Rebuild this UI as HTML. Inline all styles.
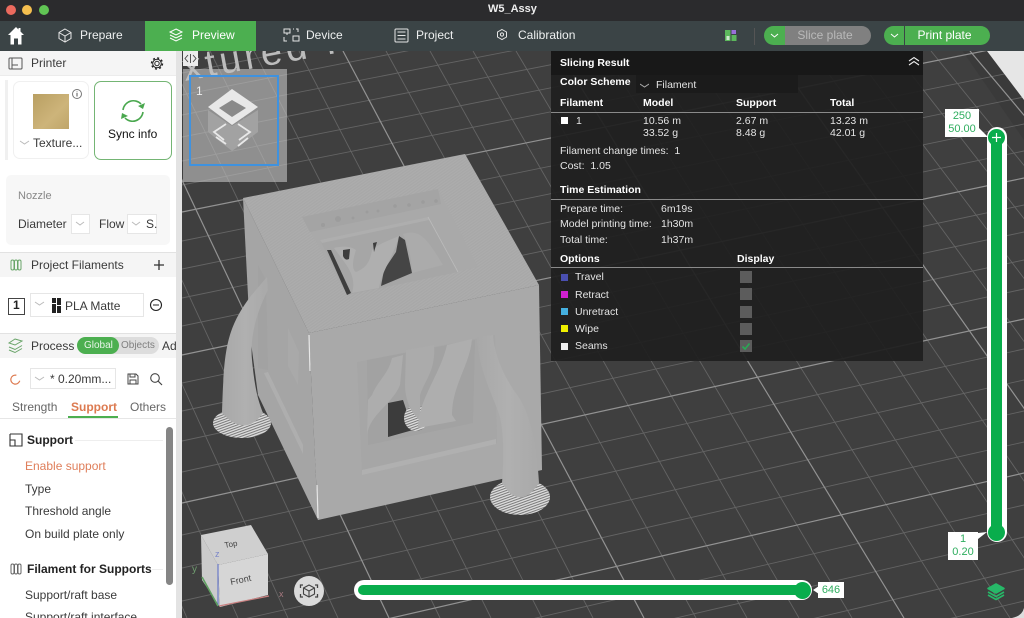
<!DOCTYPE html>
<html><head><meta charset="utf-8"><style>
html,body{margin:0;padding:0;width:1024px;height:618px;overflow:hidden;background:#3f3f3f}
body{position:relative;font-family:"Liberation Sans","DejaVu Sans",sans-serif;font-size:12px;color:#222}
.a{position:absolute}
.t{position:absolute;white-space:nowrap;line-height:14px}
svg{position:absolute;overflow:hidden}
.n{color:#eef0f0;font-size:12px}
.w{color:#e4e4e4;font-size:10.5px}
.b{color:#fff;font-size:10.5px;font-weight:bold}
.s{color:#3a3a3a;font-size:12px}
.box{position:absolute;background:#fff;border:1px solid #e6e6e6;box-sizing:border-box}
.g{color:#2fae5f;font-size:11px;text-align:center;line-height:13px;position:absolute}
</style></head><body>

<!-- viewport -->
<svg class="a" style="left:0;top:0" width="1024" height="618" viewBox="0 0 1024 618">
<defs>
<pattern id="h" width="2.4" height="2.4" patternUnits="userSpaceOnUse" patternTransform="rotate(-35)"><rect width="2.4" height="2.4" fill="#acacac"/><rect width="2.4" height="1" fill="#a7a7a7"/></pattern>
<pattern id="e" width="2.4" height="2.4" patternUnits="userSpaceOnUse" patternTransform="rotate(-20)"><rect width="2.4" height="2.4" fill="#dcdcdc"/><rect width="2.4" height="1" fill="#7a7a7a"/></pattern>
<linearGradient id="tw" x1="0" x2="1" y1="0" y2="0"><stop offset="0" stop-color="#a8a8a8"/><stop offset=".5" stop-color="#b0b0b0"/><stop offset="1" stop-color="#a9a9a9"/></linearGradient>
</defs>
<rect width="1024" height="618" fill="#3f3f3f"/>
<polygon points="955,40 1024,140 1024,40" fill="#3a3a3a"/>
<g stroke="#646464" stroke-width=".9" fill="none">
<path d="M-59,51L187,618M-14,51L238,618M31,51L288,618M76,51L338,618M166,51L440,618M210,51L491,618M254,51L542,618M299,51L593,618M386,51L696,618M430,51L747,618M473,51L799,618M516,51L852,618M603,51L957,618M645,51L1010,618M688,51L1064,618M729,51L1118,618M812,51L1226,618M852,51L1281,618M893,51L1336,618M931,51L1392,618"/>
<path d="M182,73L1024,-93M182,95L1024,-70M182,115L1024,-49M182,137L1024,-28M182,161L1024,-6M182,185L1024,18M182,241L1024,70M182,269L1024,97M182,298L1024,124M182,326L1024,151M182,383L1024,205M182,411L1024,232M182,441L1024,260M182,472L1024,289M182,535L1024,349M182,568L1024,380M182,601L1024,411M182,633L1024,442M182,700L1024,505M182,733L1024,537M182,767L1024,569M182,801L1024,601M182,835L1024,633"/>
</g>
<g stroke="#929292" stroke-width="1.2" fill="none">
<path d="M121,51L389,618M343,51L644,618M559,51L904,618M772,51L1172,618M970,51L1447,618"/>
<path d="M182,212L1024,43M182,355L1024,178M182,503L1024,319M182,666L1024,473"/>
</g>
<polygon points="987,51 1024,51 1024,100" fill="#e6e6e6"/>
<path d="M1024,608 Q1022,616 1012,618 L1024,618Z" fill="#ddd"/>
<text x="185" y="81" transform="rotate(-10.500 185 81)" font-family="Liberation Sans" font-size="38" letter-spacing="4" fill="#bcbcbc">xtured .</text>

<!-- support pads -->
<ellipse cx="242" cy="423" rx="29" ry="15" fill="url(#e)"/>
<ellipse cx="520" cy="497" rx="30" ry="18" fill="url(#e)"/>

<!-- cube -->
<polygon points="243,198 250,335 258,395 318,520 309,333" fill="#a5a5a5"/>
<polygon points="309,333 539,285 542,470 318,520" fill="#a9a9a9"/>
<polygon points="243,198 465,154 539,285 309,333" fill="url(#h)"/>
<line x1="309" y1="335" x2="310" y2="371" stroke="#e8e8e8" stroke-width="1.200"/>
<line x1="317" y1="485" x2="318" y2="518" stroke="#e8e8e8" stroke-width="1.200"/>
<!-- left face windows -->
<polygon points="264,373 268,372 303,445 303,454" fill="#aeaeae"/>
<polygon points="288,328 299,352 298,385 288,366" fill="#a9a9a9"/>
<polygon points="258,265 266,280 268,370 258,368" fill="#a2a2a2"/>

<!-- top window -->
<polygon points="302,217 438,189 478,267 347,295" fill="#a9a9a9"/>
<polygon points="302,217 438,189 441,204 310,232" fill="#a4a4a4"/>
<polygon points="320,240 428,217 458,272 347,295" fill="#a6a6a6"/>
<polygon points="327,250 331,250 351,293 347,295" fill="#3e3e3e"/>
<polygon points="399,236 405,240 412,273 381,286 384,270 396,252" fill="#454545"/>
<path d="M334,248 C342,246 350,246 356,250 C352,262 352,270 356,272 C366,268 370,262 372,250 C378,244 390,240 399,236 C394,256 382,270 379,288 L352,293 C356,280 350,270 345,263Z" fill="#afafaf"/>
<path d="M343,250 L350,249 L349,259 Q345,261 343,256Z" fill="#3c3c3c"/>
<path d="M373,243 L377,242 L374,252Z" fill="#3c3c3c"/>
<path d="M403,234 C420,228 428,240 443,265 L412,273 C412,258 408,245 403,234Z" fill="#ababab"/>
<g fill="#9c9c9c"><circle cx="323" cy="225" r="2"/><circle cx="338" cy="219" r="3"/><circle cx="353" cy="218" r="1.500"/><circle cx="367" cy="212" r="1.500"/><circle cx="378" cy="211" r="1.500"/><circle cx="395" cy="206" r="1.800"/><circle cx="409" cy="205" r="1.800"/><circle cx="423" cy="202" r="1.800"/><circle cx="436" cy="201" r="1.800"/></g>
<polygon points="320,240 428,217 429,220 322,243" fill="#aeaeae"/>
<line x1="428" y1="217" x2="458" y2="272" stroke="#bbb" stroke-width=".8"/>

<!-- front window -->
<polygon points="357,362 495,335 497,443 362,473" fill="#a6a6a6"/>
<polygon points="367,360 475,340 473,423 368,445" fill="#a2a2a2"/>
<polygon points="362,470 496,439 496,444 362,475" fill="#b0b0b0"/>
<polygon points="388,403 403,400 413,430 388,437" fill="#3c3c3c"/>
<ellipse cx="416" cy="418" rx="12" ry="13" fill="url(#e)"/>
<path d="M367,437 C368,415 392,405 400,385 L403,355 L392,358 C388,375 378,380 372,395 L368,400Z" fill="#adadad"/>
<path d="M406,350 L434,345 C436,370 425,380 420,395 L420,420 C412,415 405,400 405,385Z" fill="#ababab"/>
<path d="M418,428 C418,400 440,375 447,345 L472,339 C470,365 452,385 452,415 L456,421Z" fill="#aeaeae"/>

<!-- towers -->
<path d="M222,413 C224,350 226,330 250,297 L267,277 L268,290 C255,315 250,340 252,360 C255,390 258,400 263,413 Q245,438 222,413Z" fill="url(#tw)"/>
<path d="M477,337 C478,370 495,400 500,417 C505,440 503,470 502,483 Q520,512 539,483 C537,445 530,410 515,392 C500,370 494,350 493,335Z" fill="url(#tw)"/>

<!-- plate thumbnail -->
<rect x="183" y="69" width="104" height="113" fill="#c0c0c0" fill-opacity=".62"/>
<rect x="190" y="76" width="88" height="89" fill="none" stroke="#3f92df" stroke-width="2"/>
<text x="196" y="95" font-size="12" fill="#eee">1</text>
<polygon points="208,110 232,126 258,110 258,132 232,151 208,132" fill="#a2a2a2"/>
<polygon points="232,89 258,107 232,125 208,107" fill="#e8e8e8"/>
<polygon points="232,100 246,108 232,117 219,108" fill="#8a8a8a"/>
<path d="M226,124 L214,132 L224,140 M216,137 L226,144 M238,124 L250,132 L239,140 M248,138 L238,146" stroke="#e8e8e8" stroke-width="1.800" fill="none"/>

<!-- collapse btn -->
<rect x="183" y="51" width="15" height="15" fill="#ececec"/>
<path d="M188,55l-3,3.500 3,3.500M193,55l3,3.500-3,3.500M190.500,54v9" stroke="#444" stroke-width=".9" fill="none"/>

<!-- nav cube -->
<polygon points="201,535 251,525 268,554 218,565" fill="#cfcfcf"/>
<polygon points="218,565 268,554 268,595 220,607" fill="#d6d6d6"/>
<polygon points="201,535 218,565 220,607 202,580" fill="#cbcbcb"/>
<text x="225" y="548" font-size="8" fill="#444" transform="rotate(-10 225 548)">Top</text>
<text x="231" y="585" font-size="9" fill="#444" transform="rotate(-12 231 585)">Front</text>
<line x1="218" y1="606" x2="218" y2="564" stroke="#6a7ac8" stroke-width="1.200"/>
<line x1="219" y1="606" x2="269" y2="596" stroke="#c98080" stroke-width="1.200"/>
<line x1="218" y1="606" x2="202" y2="577" stroke="#5fa060" stroke-width="1.600"/>
<text x="215" y="557" font-size="9" fill="#7b86c8">z</text>
<text x="192" y="572" font-size="10" fill="#6f9d6f">y</text>
<text x="279" y="597" font-size="9" fill="#a87a80">x</text>
<circle cx="309" cy="591" r="15" fill="#dadada"/>
<path d="M303,585h-2.500v3M315,585h2.500v3M303,597h-2.500v-3M315,597h2.500v-3" stroke="#444" stroke-width="1.300" fill="none"/>
<path d="M309,585l5.500,3v6l-5.500,3-5.500-3v-6zM303.500,588l5.500,3 5.500-3M309,591v6" stroke="#444" stroke-width="1.100" fill="none"/>

<!-- stack -->
<g fill="none" stroke="#27b868" stroke-width="1.600" stroke-linejoin="round"><path d="M996,584l8,4.500-8,4.500-8-4.500z" fill="#27b868"/><path d="M988,592l8,4.500 8-4.500"/><path d="M988,595l8,4.500 8-4.500"/></g>
</svg>

<!-- slider V -->
<div class="a" style="left:987px;top:127px;width:20px;height:415px;background:#fff;border-radius:10px"></div>
<div class="a" style="left:991px;top:137px;width:11px;height:395px;background:#09ad4c"></div>
<div class="a" style="left:988px;top:129px;width:17px;height:17px;border-radius:50%;background:#09ad4c"></div>
<div class="a" style="left:988px;top:524px;width:17px;height:17px;border-radius:50%;background:#09ad4c"></div>
<svg class="a" style="left:988px;top:129px" width="17" height="17"><path d="M8.500,4v9M4,8.500h9" stroke="#fff" stroke-width="1.200"/></svg>
<div class="a" style="left:945px;top:109px;width:34px;height:28px;background:#fff"></div>
<svg class="a" style="left:975px;top:128px" width="14" height="10"><polygon points="0,0 4,0 13,9 0,9" fill="#fff"/></svg>
<div class="g" style="left:945px;top:110px;width:34px">250<br>50.00</div>
<div class="a" style="left:948px;top:532px;width:30px;height:28px;background:#fff"></div>
<svg class="a" style="left:975px;top:530px" width="14" height="10"><polygon points="0,10 3,3 12,2 3,9" fill="#fff"/></svg>
<div class="g" style="left:948px;top:533px;width:30px">1<br>0.20</div>

<!-- slider H -->
<div class="a" style="left:354px;top:580px;width:458px;height:20px;background:#fff;border-radius:10px"></div>
<div class="a" style="left:358px;top:585px;width:444px;height:10px;background:#09ad4c;border-radius:5px 0 0 5px"></div>
<div class="a" style="left:794px;top:582px;width:17px;height:17px;border-radius:50%;background:#09ad4c"></div>
<div class="a" style="left:818px;top:582px;width:26px;height:16px;background:#fff"></div>
<svg class="a" style="left:813px;top:586px" width="6" height="8"><polygon points="0,4 6,0 6,8" fill="#fff"/></svg>
<div class="g" style="left:818px;top:584px;width:26px">646</div>

<!-- slicing result panel -->
<div class="a" style="left:551px;top:51px;width:372px;height:310px;background:rgba(32,32,32,.94)"></div>
<div class="a" style="left:551px;top:51px;width:372px;height:24px;background:#181818"></div>
<div class="a" style="left:636px;top:75px;width:162px;height:18px;background:#1b1b1b"></div>
<div class="a" style="left:551px;top:112px;width:372px;height:1px;background:#8a8a8a"></div>
<div class="a" style="left:551px;top:199px;width:372px;height:1px;background:#8a8a8a"></div>
<div class="a" style="left:551px;top:267px;width:372px;height:1px;background:#8a8a8a"></div>
<span class="t b" style="left:560px;top:56px">Slicing Result</span>
<svg class="a" style="left:908px;top:56px" width="12" height="10"><path d="M1,5l5-3.500 5,3.500M1,9l5-3.500 5,3.500" stroke="#eee" stroke-width="1.100" fill="none"/></svg>
<span class="t b" style="left:560px;top:75px">Color Scheme</span>
<svg class="a" style="left:640px;top:83px" width="9" height="5"><path d="M0,1l4.500,3 4.500-3" stroke="#aaa" fill="none"/></svg>
<span class="t w" style="left:656px;top:78px">Filament</span>
<span class="t b" style="left:560px;top:96px">Filament</span>
<span class="t b" style="left:643px;top:96px">Model</span>
<span class="t b" style="left:736px;top:96px">Support</span>
<span class="t b" style="left:830px;top:96px">Total</span>
<div class="a" style="left:561px;top:117px;width:7px;height:7px;background:#fff"></div>
<span class="t w" style="left:576px;top:114px">1</span>
<span class="t w" style="left:643px;top:115px;line-height:12px">10.56 m<br>33.52 g</span>
<span class="t w" style="left:736px;top:115px;line-height:12px">2.67 m<br>8.48 g</span>
<span class="t w" style="left:830px;top:115px;line-height:12px">13.23 m<br>42.01 g</span>
<span class="t w" style="left:560px;top:144px">Filament change times:&nbsp; 1</span>
<span class="t w" style="left:560px;top:159px">Cost:&nbsp; 1.05</span>
<span class="t b" style="left:560px;top:183px">Time Estimation</span>
<span class="t w" style="left:560px;top:202px">Prepare time:</span><span class="t w" style="left:661px;top:202px">6m19s</span>
<span class="t w" style="left:560px;top:217px">Model printing time:</span><span class="t w" style="left:661px;top:217px">1h30m</span>
<span class="t w" style="left:560px;top:233px">Total time:</span><span class="t w" style="left:661px;top:233px">1h37m</span>
<span class="t b" style="left:560px;top:252px">Options</span>
<span class="t b" style="left:737px;top:252px">Display</span>
<div class="a" style="left:561px;top:274px;width:7px;height:7px;background:#4a4fb0"></div><span class="t w" style="left:575px;top:270px">Travel</span>
<div class="a" style="left:561px;top:291px;width:7px;height:7px;background:#d020d0"></div><span class="t w" style="left:575px;top:288px">Retract</span>
<div class="a" style="left:561px;top:308px;width:7px;height:7px;background:#45b0e0"></div><span class="t w" style="left:575px;top:305px">Unretract</span>
<div class="a" style="left:561px;top:325px;width:7px;height:7px;background:#f0f000"></div><span class="t w" style="left:575px;top:322px">Wipe</span>
<div class="a" style="left:561px;top:343px;width:7px;height:7px;background:#eee"></div><span class="t w" style="left:575px;top:339px">Seams</span>
<div class="a" style="left:740px;top:271px;width:12px;height:12px;background:#5c5c5c"></div>
<div class="a" style="left:740px;top:288px;width:12px;height:12px;background:#5c5c5c"></div>
<div class="a" style="left:740px;top:306px;width:12px;height:12px;background:#5c5c5c"></div>
<div class="a" style="left:740px;top:323px;width:12px;height:12px;background:#5c5c5c"></div>
<div class="a" style="left:740px;top:340px;width:12px;height:12px;background:#5c5c5c"></div>
<svg class="a" style="left:740px;top:340px" width="12" height="12"><path d="M2.500,6.500l2.500,2.500 4.500-5.500" stroke="#2aa855" stroke-width="1.600" fill="none"/></svg>

<!-- title bar -->
<div class="a" style="left:0;top:0;width:1024px;height:21px;background:#2b2b2d"></div>
<div class="a" style="left:6px;top:5px;width:10px;height:10px;border-radius:50%;background:#ec6a5e"></div>
<div class="a" style="left:22px;top:5px;width:10px;height:10px;border-radius:50%;background:#f5bf4f"></div>
<div class="a" style="left:39px;top:5px;width:10px;height:10px;border-radius:50%;background:#61c554"></div>
<span class="t" style="left:488px;top:2px;color:#eee;font-weight:bold;font-size:11px">W5_Assy</span>

<!-- toolbar -->
<div class="a" style="left:0;top:21px;width:1024px;height:30px;background:#3b4446"></div>
<div class="a" style="left:145px;top:21px;width:111px;height:30px;background:#4caf50"></div>
<svg class="a" style="left:0;top:21px" width="1024" height="30" viewBox="0 21 1024 30">
<path d="M16,27 L8,35 H10.500 V44.500 H14 V38.500 H18 V44.500 H21.500 V35 H24 L20.500,31.500 V28 H18.500 V29.500Z" fill="#fff"/>
<g fill="none" stroke="#e6e6e6" stroke-width="1">
<path d="M65,29l6,3.500v6l-6,3.500-6-3.500v-6zM59,32.500l6,3.500 6-3.500M65,36v6"/>
<path d="M176,29l6,3-6,3-6-3zM170,35l6,3 6-3M170,38l6,3 6-3" stroke="#fff"/>
<rect x="284" y="29" width="6" height="4"/><path d="M284,37v4h3M296,29h2v3M293,29h1"/><rect x="293" y="36" width="6" height="5"/><path d="M287,33v2"/>
<rect x="395" y="29" width="13" height="13" rx="1"/><path d="M397.500,32h8M397.500,35.500h8M397.500,39h8"/>
<path d="M502,29.500l4.500,2.500v5l-4.500,2.500-4.500-2.500v-5z"/><circle cx="502" cy="34.500" r="1.600"/>
</g>
<rect x="725" y="30" width="5.500" height="11" fill="#5cb85c"/><rect x="731.500" y="35" width="5" height="6" fill="#5cb85c"/><rect x="731.500" y="30" width="4.500" height="4" fill="#9a6fd8"/><rect x="726.500" y="36" width="3" height="4" fill="#cfe8cf"/>
<line x1="754.500" y1="28" x2="754.500" y2="45" stroke="#555"/>
</svg>
<span class="t n" style="left:80px;top:28px">Prepare</span>
<span class="t n" style="left:192px;top:28px;color:#fff">Preview</span>
<span class="t n" style="left:306px;top:28px">Device</span>
<span class="t n" style="left:416px;top:28px">Project</span>
<span class="t n" style="left:518px;top:28px">Calibration</span>

<div class="a" style="left:764px;top:26px;width:21px;height:19px;background:#4caf50;border-radius:10px 0 0 10px"></div>
<div class="a" style="left:785px;top:26px;width:86px;height:19px;background:#808080;border-radius:0 10px 10px 0"></div>
<span class="t" style="left:785px;top:28px;width:80px;text-align:center;color:#b9b9b9">Slice plate</span>
<div class="a" style="left:884px;top:26px;width:20px;height:19px;background:#4caf50;border-radius:10px 0 0 10px"></div>
<div class="a" style="left:905px;top:26px;width:85px;height:19px;background:#4caf50;border-radius:0 10px 10px 0"></div>
<span class="t" style="left:905px;top:28px;width:79px;text-align:center;color:#fff">Print plate</span>
<svg class="a" style="left:770px;top:33px" width="9" height="6"><path d="M1,1l3.500,3 3.500-3" stroke="#fff" fill="none"/></svg>
<svg class="a" style="left:890px;top:33px" width="9" height="6"><path d="M1,1l3.500,3 3.500-3" stroke="#fff" fill="none"/></svg>

<!-- sidebar -->
<div class="a" style="left:0;top:51px;width:176px;height:567px;background:#fff;overflow:hidden">
<div class="a" style="left:0;top:0;width:176px;height:24px;background:#f5f5f5;border-bottom:1px solid #ececec"></div>
<div class="a" style="left:5px;top:29px;width:3px;height:80px;background:#f0f0f0"></div>
<div class="a" style="left:13px;top:30px;width:76px;height:78px;border:1px solid #f0f0f0;border-radius:7px;box-sizing:border-box"></div>
<div class="a" style="left:33px;top:43px;width:36px;height:35px;background:linear-gradient(135deg,#b99f62,#cdb47a 60%,#bfa569)"></div>
<div class="a" style="left:94px;top:30px;width:78px;height:79px;border:1px solid #74b574;border-radius:7px;box-sizing:border-box"></div>
<div class="a" style="left:6px;top:124px;width:164px;height:70px;background:#f7f7f7;border-radius:5px"></div>
<div class="a" style="left:0;top:201px;width:176px;height:25px;background:#f5f5f5;border-top:1px solid #e2e2e2;box-sizing:border-box"></div>
<div class="a" style="left:0;top:282px;width:176px;height:25px;background:#f5f5f5;border-top:1px solid #e2e2e2;box-sizing:border-box"></div>
<div class="a" style="left:77px;top:286px;width:82px;height:17px;background:#ddd;border-radius:9px"></div>
<div class="a" style="left:77px;top:286px;width:42px;height:17px;background:#4caf50;border-radius:9px"></div>
<div class="box" style="left:71px;top:163px;width:19px;height:20px"></div>
<div class="box" style="left:127px;top:163px;width:30px;height:20px"></div>
<div class="box" style="left:8px;top:247px;width:17px;height:17px;border:1px solid #444"></div>
<div class="box" style="left:30px;top:242px;width:114px;height:24px"></div>
<div class="box" style="left:30px;top:317px;width:86px;height:21px"></div>
<div class="a" style="left:68px;top:365px;width:50px;height:2px;background:#4caf50"></div>
<div class="a" style="left:0;top:367px;width:176px;height:1px;background:#e6e6e6"></div>
<div class="a" style="left:166px;top:376px;width:7px;height:158px;background:#858585;border-radius:4px"></div>
<div class="a" style="left:75px;top:389px;width:88px;height:1px;background:#eee"></div>
<div class="a" style="left:152px;top:518px;width:11px;height:1px;background:#eee"></div>

<span class="t s" style="left:31px;top:5px">Printer</span>
<span class="t s" style="left:33px;top:85px">Texture...</span>
<span class="t" style="left:108px;top:76px;color:#111">Sync info</span>
<span class="t" style="left:18px;top:138px;font-size:11px;color:#888">Nozzle</span>
<span class="t s" style="left:18px;top:166px">Diameter</span>
<span class="t s" style="left:99px;top:166px">Flow</span>
<span class="t s" style="left:146px;top:166px">S.</span>
<span class="t s" style="left:31px;top:207px">Project Filaments</span>
<span class="t" style="left:13px;top:247px;font-weight:bold;font-size:12px;color:#222">1</span>
<span class="t s" style="left:65px;top:248px">PLA Matte</span>
<span class="t s" style="left:31px;top:288px">Process</span>
<span class="t" style="left:84px;top:288px;font-size:10px;color:#e8f5e8">Global</span>
<span class="t" style="left:121px;top:288px;font-size:10px;color:#808080">Objects</span>
<span class="t s" style="left:162px;top:288px;width:14px;overflow:hidden">Ad</span>
<span class="t s" style="left:50px;top:321px">* 0.20mm...</span>
<span class="t" style="left:12px;top:349px;color:#666">Strength</span>
<span class="t" style="left:71px;top:349px;color:#dc7a50;font-weight:bold">Support</span>
<span class="t" style="left:130px;top:349px;color:#666">Others</span>
<span class="t" style="left:27px;top:382px;font-weight:bold;color:#222">Support</span>
<span class="t" style="left:25px;top:408px;color:#df7e5a">Enable support</span>
<span class="t s" style="left:25px;top:431px">Type</span>
<span class="t s" style="left:25px;top:453px">Threshold angle</span>
<span class="t s" style="left:25px;top:476px">On build plate only</span>
<span class="t" style="left:27px;top:511px;font-weight:bold;color:#222">Filament for Supports</span>
<span class="t s" style="left:25px;top:537px">Support/raft base</span>
<span class="t s" style="left:25px;top:559px;height:8px;overflow:hidden">Support/raft interface</span>
</div>
<div class="a" style="left:176px;top:51px;width:6px;height:567px;background:#e3e3e3"></div>

<svg class="a" style="left:0;top:51px" width="182" height="567" viewBox="0 51 182 567">
<g fill="none" stroke="#555" stroke-width="1">
<rect x="9" y="58" width="13" height="11" rx="1"/><path d="M12,58v11M12,65h6"/>
<circle cx="157" cy="63.500" r="2.200" stroke="#222"/>
<circle cx="157" cy="63.500" r="4.300" stroke="#222" stroke-width="1"/>
<circle cx="157" cy="63.500" r="5.500" stroke="#222" stroke-width="1.400" stroke-dasharray="2 2.320"/>
<circle cx="77" cy="94" r="4.500" stroke="#777"/><path d="M77,93v3.500M77,91.500v.8" stroke="#555"/>
<path d="M20,141l4.500,3 4.500-3M76,222l4,3 4-3M132,222l4,3 4-3M35,302l4.500,3 4.500-3M35,377l4.500,3 4.500-3" stroke="#bbb"/>
</g>
<g fill="none" stroke="#4aa84f" stroke-width="1.600"><path d="M123,110a10.500,10.500 0 0 1 18,-6"/><path d="M143,112a10.500,10.500 0 0 1 -18,6"/></g>
<polygon points="138,106 145,103 143,109" fill="#4aa84f"/><polygon points="128,116 121,119 122,113" fill="#4aa84f"/>
<g fill="none" stroke="#6aa56a" stroke-width="1"><rect x="11" y="260" width="3" height="10" rx="1.500"/><rect x="14.500" y="260" width="3" height="10" rx="1.500"/><rect x="18" y="260" width="3" height="10" rx="1.500"/></g>
<path d="M159,260v10M154,265h10" stroke="#333" stroke-width="1.300"/>
<rect x="52" y="298" width="4" height="5" fill="#222"/><rect x="57" y="298" width="4" height="7" fill="#222"/><rect x="52" y="304" width="4" height="9" fill="#222"/><rect x="57" y="306" width="4" height="7" fill="#222"/>
<circle cx="156" cy="305" r="5.500" fill="none" stroke="#222" stroke-width="1.100"/><path d="M153,305h6" stroke="#222"/>
<g fill="none" stroke="#6aa56a" stroke-width="1"><path d="M15,339l7,2-7,4-6-2zM9,347l6,2.500 7-4M9,350l6,2.500 7-4"/></g>
<path d="M19,379a4.500,4.500 0 1 0 -4,5" fill="none" stroke="#dd7a50" stroke-width="1.200" transform="rotate(-70 15 379)"/>
<path d="M128,374h8l2,2v8h-10zM130,374v3h5v-3M130,384v-4h6v4" fill="none" stroke="#444"/>
<circle cx="155" cy="378" r="4.300" fill="none" stroke="#444" stroke-width="1.100"/><path d="M158,381l4,4" stroke="#444" stroke-width="1.200"/>
<path d="M10,434h12v12h-7M10,434v12h5v-6h-5" fill="none" stroke="#333" stroke-width="1.100"/>
<g fill="none" stroke="#666" stroke-width="1"><rect x="11" y="564" width="3" height="10" rx="1.500"/><rect x="14.500" y="564" width="3" height="10" rx="1.500"/><rect x="18" y="564" width="3" height="10" rx="1.500"/></g>
</svg>
</body></html>
